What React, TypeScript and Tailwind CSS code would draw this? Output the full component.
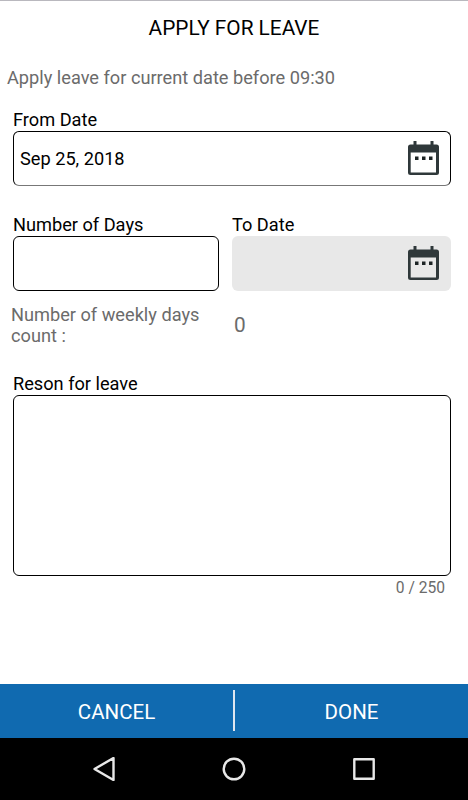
import React from "react";

interface FieldLabelProps {
  htmlFor: string;
  children: React.ReactNode;
}

const FieldLabel: React.FC<FieldLabelProps> = ({ htmlFor, children }) => (
  <label htmlFor={htmlFor} className="block h-[23px] text-[18.2px] leading-[23px] text-black">
    {children}
  </label>
);

const CalendarIcon: React.FC = () => (
  <svg className="h-[35px] w-[31px] shrink-0" viewBox="0 0 31 35" fill="none">
    <path d="M5.500 0h3v5h-3zM22.500 0h3v5h-3z" fill="#2f383a" />
    <path
      fillRule="evenodd"
      d="M2.500 3.500h26A2.500 2.500 0 0 1 31 6v25.500a2.500 2.500 0 0 1-2.500 2.500h-26A2.500 2.500 0 0 1 0 31.500V6a2.500 2.500 0 0 1 2.500-2.500zM2.700 11.500v20h25.300v-20z"
      fill="#2f383a"
    />
    <path d="M7 15.500h3.500V19H7zM14 15.500h3.500V19H14zM21 15.500h3.500V19H21z" fill="#1c2324" />
  </svg>
);

const App: React.FC = () => {
  const [days, setDays] = React.useState("");
  const [reason, setReason] = React.useState("");

  return (
    <div className="flex h-[800px] w-[468px] flex-col overflow-hidden border-t border-[#b9b8be] bg-white font-[Roboto,sans-serif]">
      <h1 className="mt-[13px] h-7 text-center text-[20.8px] leading-7 text-black">APPLY FOR LEAVE</h1>
      <p className="mt-6 h-6 pl-[7px] text-[18.2px] leading-6 text-[#6b6b6b]">
        Apply leave for current date before 09:30
      </p>

      <main className="mt-[18px] flex-1 pl-[13px] pr-[17px]">
        <FieldLabel htmlFor="from">From Date</FieldLabel>
        <button
          id="from"
          className="flex h-[55px] w-full items-center justify-between rounded-md border border-black border-b-[#777] pl-1.5 pr-[11px] text-[18.2px] text-black"
        >
          <span>Sep 25, 2018</span>
          <CalendarIcon />
        </button>

        <div className="mt-[27px] flex gap-[13px]">
          <div className="w-[206px]">
            <FieldLabel htmlFor="days">Number of Days</FieldLabel>
            <input
              id="days"
              className="block h-[55px] w-full rounded-md border border-black px-1.5 text-[18.2px] outline-none"
              value={days}
              onChange={(e) => setDays(e.target.value)}
            />
          </div>
          <div className="flex-1">
            <FieldLabel htmlFor="to">To Date</FieldLabel>
            <button
              id="to"
              className="flex h-[55px] w-full items-center justify-end rounded-md bg-[#e8e8e8] pr-3"
              disabled
            >
              <CalendarIcon />
            </button>
          </div>
        </div>

        <div className="mt-3 flex h-[43px] items-center text-[#6b6b6b]">
          <p className="-ml-0.5 w-[223px] pr-6 text-[18.2px] leading-[21px]">Number of weekly days count :</p>
          <span className="pt-0.5 text-[20.8px]">0</span>
        </div>

        <div className="mt-[26px]">
          <FieldLabel htmlFor="reason">Reson for leave</FieldLabel>
          <textarea
            id="reason"
            className="block h-[181px] w-full resize-none rounded-md border border-black p-1.5 text-[18.2px] outline-none"
            maxLength={250}
            value={reason}
            onChange={(e) => setReason(e.target.value)}
          />
          <p className="pr-1.5 text-right text-[15.6px] leading-6 text-[#6b6b6b]">{reason.length} / 250</p>
        </div>
      </main>

      <div className="flex h-[54px] shrink-0 items-start bg-[#106ab0] text-[20.5px] text-white">
        <button className="h-full flex-1 pt-0.5">CANCEL</button>
        <span className="mt-1.5 h-[41px] w-0.5 bg-[#dfe6f0]" />
        <button className="h-full flex-1 pt-0.5">DONE</button>
      </div>

      <nav className="flex h-[62px] shrink-0 items-center justify-center gap-[106px] bg-black">
        <svg className="h-6 w-6" viewBox="0 0 24 24" fill="none" stroke="#e8e8e8" strokeWidth="2.4" strokeLinejoin="round">
          <path d="M21.500 1v22L2.500 12z" />
        </svg>
        <svg className="h-6 w-6" viewBox="0 0 24 24" fill="none" stroke="#e8e8e8" strokeWidth="2.4">
          <circle cx="12" cy="12" r="10.3" />
        </svg>
        <svg className="h-6 w-6" viewBox="0 0 24 24" fill="none" stroke="#e8e8e8" strokeWidth="2.4" strokeLinejoin="round">
          <path d="M2.300 2.300h19.400v19.400H2.300z" />
        </svg>
      </nav>
    </div>
  );
};

export default App;
